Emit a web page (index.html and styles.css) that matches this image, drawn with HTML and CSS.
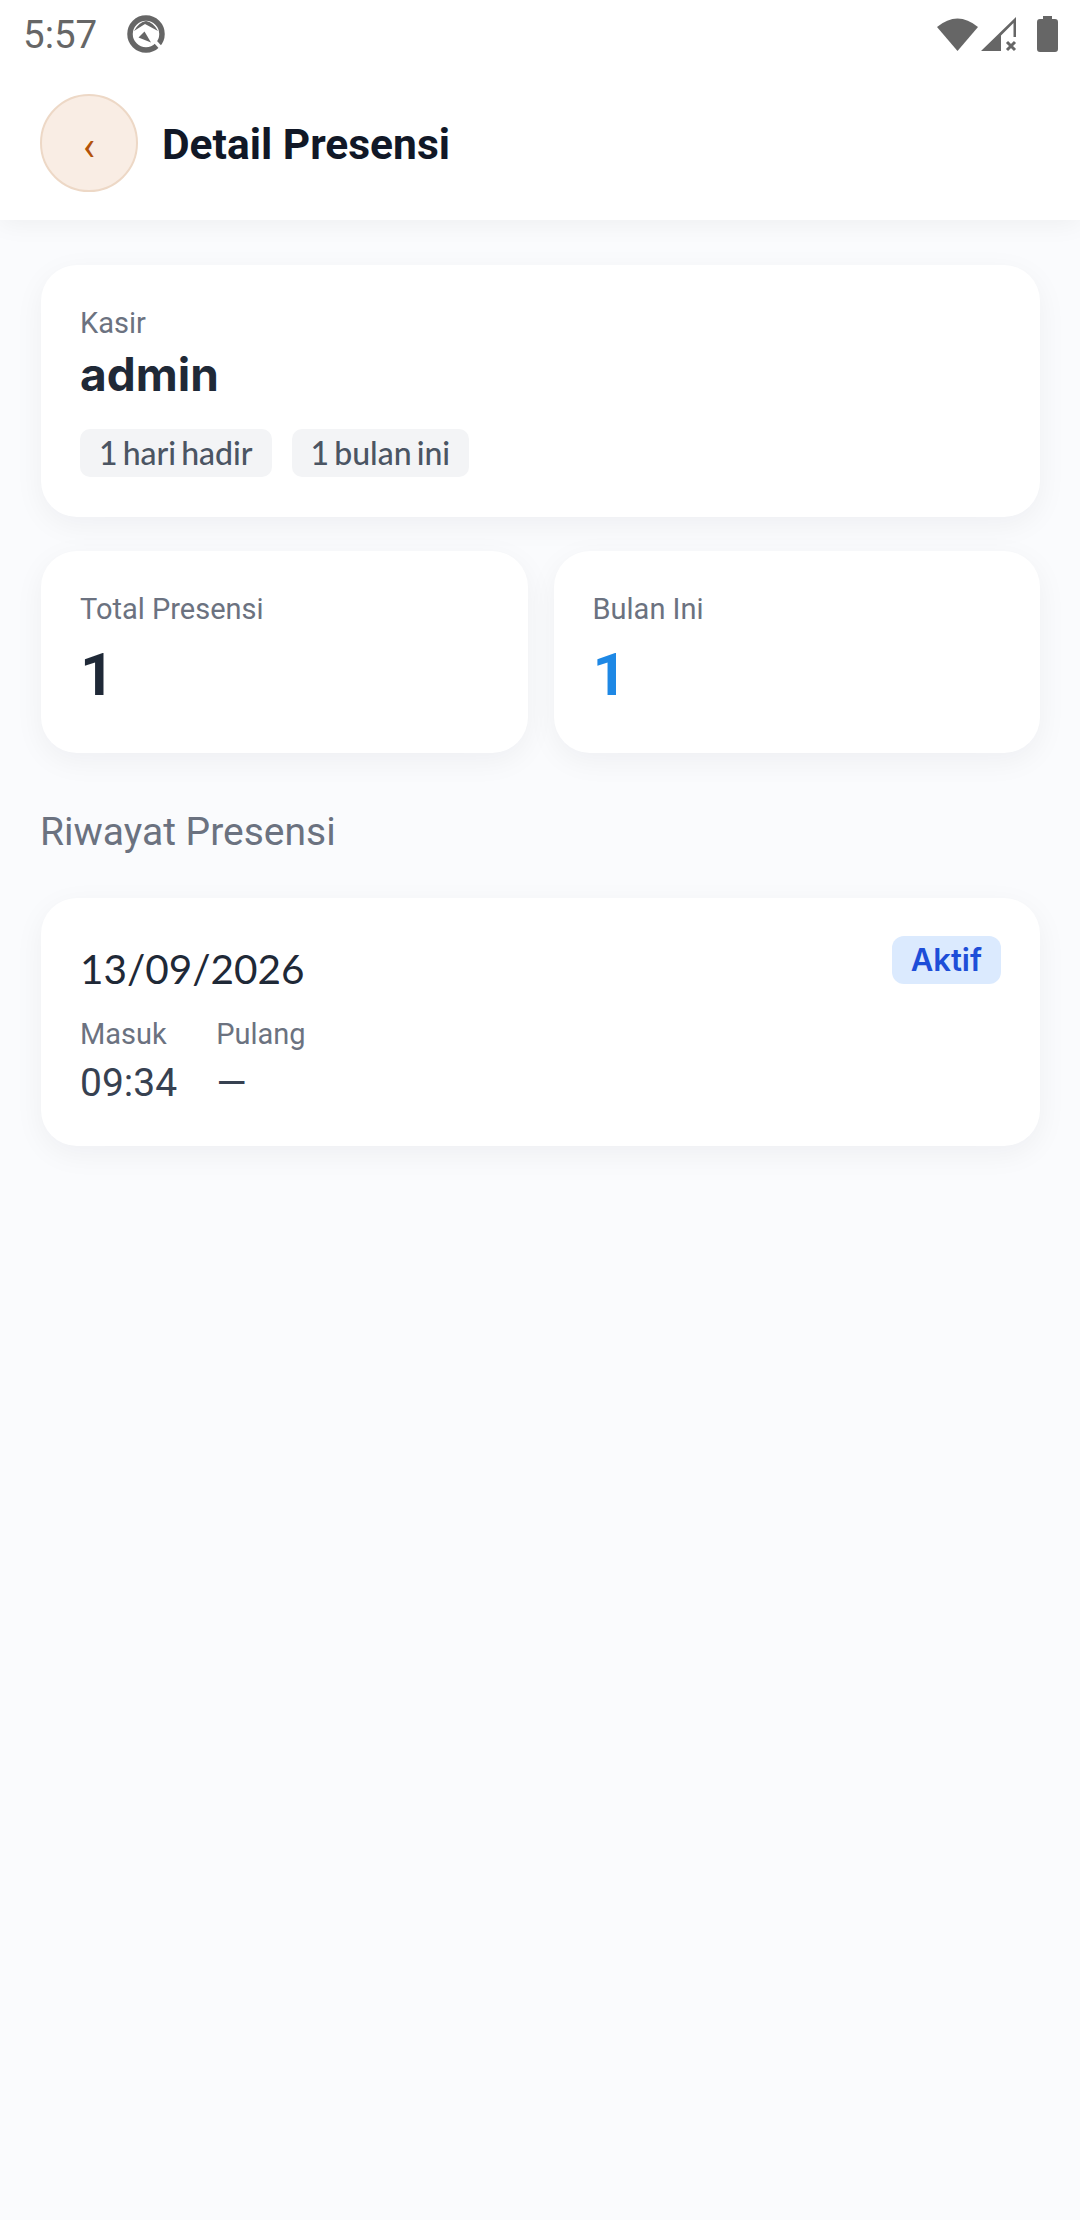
FILE: index.html
```html
<!DOCTYPE html>
<html lang="en">
<head>
    <meta charset="UTF-8">
    <meta name="viewport" content="width=device-width, initial-scale=1.0">
    <title>Detail Presensi</title>
    <link rel="stylesheet" href="styles.css">
</head>
<body>
    <div class="top">
        <!-- Status bar -->
        <div class="status-bar">
            <div class="status-left">
                <span class="clock">5:57</span>
                <svg width="40" height="40" viewBox="0 0 40 40">
                    <circle cx="20" cy="20" r="16" fill="none" stroke="#666" stroke-width="5.500"/>
                    <path d="M8 17 Q13 8 20 7 Q27 8 32 17 L19 10 Z" fill="#666"/>
                    <path d="M12.500 23.500 L18.500 17.500 L25 28.500 Z" fill="#666"/>
                    <path d="M24 22 L35 34" stroke="#fff" stroke-width="3.500" fill="none"/>
                </svg>
            </div>
            <div class="status-right">
                <svg class="wifi" width="41" height="35" viewBox="0 0 41 35"><path d="M0 10 Q20.500 -7 41 10 L20.500 34 Z" fill="#666"/></svg>
                <svg class="signal" width="36" height="36" viewBox="0 0 36 36">
                    <path d="M35 1 V21 H32.500 V7 L20 19.500 V35 H0 Z" fill="#666"/>
                    <path d="M26 26 L34 34 M34 26 L26 34" stroke="#666" stroke-width="3" fill="none"/>
                </svg>
                <svg class="battery" width="21" height="36" viewBox="0 0 21 36"><path d="M6 0 H15 V3 H18 Q21 3 21 6 V33 Q21 36 18 36 H3 Q0 36 0 33 V6 Q0 3 3 3 H6 Z" fill="#666"/></svg>
            </div>
        </div>

        <!-- Header -->
        <div class="header">
            <button class="back-btn">‹</button>
            <h1>Detail Presensi</h1>
        </div>
    </div>

    <div class="content">
        <div class="card profile">
            <div class="label">Kasir</div>
            <div class="name">admin</div>
            <div class="chips">
                <span class="chip">1 hari hadir</span>
                <span class="chip">1 bulan ini</span>
            </div>
        </div>

        <div class="stats">
            <div class="card stat">
                <div class="label">Total Presensi</div>
                <div class="stat-value">1</div>
            </div>
            <div class="card stat">
                <div class="label">Bulan Ini</div>
                <div class="stat-value blue">1</div>
            </div>
        </div>

        <h2 class="section-title">Riwayat Presensi</h2>

        <div class="card history">
            <div class="history-main">
                <div class="date">13/09/2026</div>
                <div class="times">
                    <div>
                        <div class="label">Masuk</div>
                        <div class="time">09:34</div>
                    </div>
                    <div>
                        <div class="label">Pulang</div>
                        <div class="time">—</div>
                    </div>
                </div>
            </div>
            <span class="badge">Aktif</span>
        </div>
    </div>
</body>
</html>
```

FILE: styles.css
```css
/* General Body Styles */
body {
    font-family: Roboto, sans-serif;
    background-color: #fafbfd;
    margin: 0;
    padding: 0;
    min-height: 2220px;
}

/* Status bar + header */
.top {
    background-color: #fff;
    height: 220px;
    box-shadow: 0 4px 24px rgba(0, 0, 0, 0.05);
}

.status-bar {
    height: 68px;
    padding: 0 22px 0 23px;
    display: flex;
    justify-content: space-between;
    align-items: center;
}

.status-left {
    display: flex;
    align-items: center;
    gap: 29px;
}

.clock {
    font-size: 38.5px;
    color: #666;
}

.status-right {
    display: flex;
    align-items: center;
}

.signal {
    margin-left: 3px;
    margin-right: 20px;
}

.header {
    display: flex;
    align-items: center;
    gap: 24px;
    padding: 26px 38px 0 40px;
}

.back-btn {
    width: 98px;
    height: 98px;
    border-radius: 50%;
    border: 2px solid #edd8c6;
    background-color: #f9ede4;
    color: #b45309;
    font-family: Roboto, sans-serif;
    font-size: 40px;
    line-height: 1;
    padding: 8px 0 0;
}

h1 {
    margin: 2px 0 0;
    font-size: 42.5px;
    font-weight: 700;
    color: #111827;
}

/* Content */
.content {
    padding: 45px 40px 0 41px;
}

.card {
    background-color: #fff;
    border-radius: 36px;
    box-shadow: 0 8px 30px rgba(17, 24, 39, 0.05);
    box-sizing: border-box;
}

.label {
    font-size: 29px;
    color: #6b7280;
}

.profile {
    height: 252px;
    padding: 41px 39px 0;
}

.name {
    font-family: Inter, sans-serif;
    font-size: 46px;
    font-weight: 700;
    color: #1f2937;
    line-height: 56px;
    margin-top: 6px;
}

.chips {
    display: flex;
    gap: 20px;
    margin-top: 27px;
}

.chip {
    font-family: Lato, sans-serif;
    font-size: 32px;
    font-weight: 500;
    word-spacing: -3px;
    color: #4b5563;
    background-color: #f3f4f6;
    border-radius: 10px;
    padding: 0 19px;
    height: 48px;
    line-height: 48px;
}

.stats {
    display: flex;
    gap: 26px;
    margin-top: 34px;
}

.stat {
    flex: 1;
    height: 202px;
    padding: 41px 39px 0;
}

.stat-value {
    font-size: 60px;
    font-weight: 700;
    color: #1f2937;
    margin-top: 13px;
}

.stat-value.blue {
    color: #1e88e5;
}

.section-title {
    margin: 56px 0 43px -1px;
    font-size: 39px;
    font-weight: 400;
    color: #6b7280;
}

.history {
    height: 248px;
    padding: 38px 39px 0;
    display: flex;
    justify-content: space-between;
    align-items: flex-start;
}

.date {
    font-family: Lato, sans-serif;
    font-size: 40.5px;
    color: #1f2937;
    margin-top: 8px;
}

.times {
    display: flex;
    gap: 39px;
    margin-top: 24px;
}

.time {
    font-size: 39px;
    color: #374151;
    margin-top: 9px;
}

.badge {
    font-family: Inter, sans-serif;
    font-size: 31px;
    font-weight: 600;
    color: #1d4ed8;
    background-color: #dbeafe;
    border-radius: 12px;
    padding: 0 19px;
    height: 48px;
    line-height: 48px;
}
```
